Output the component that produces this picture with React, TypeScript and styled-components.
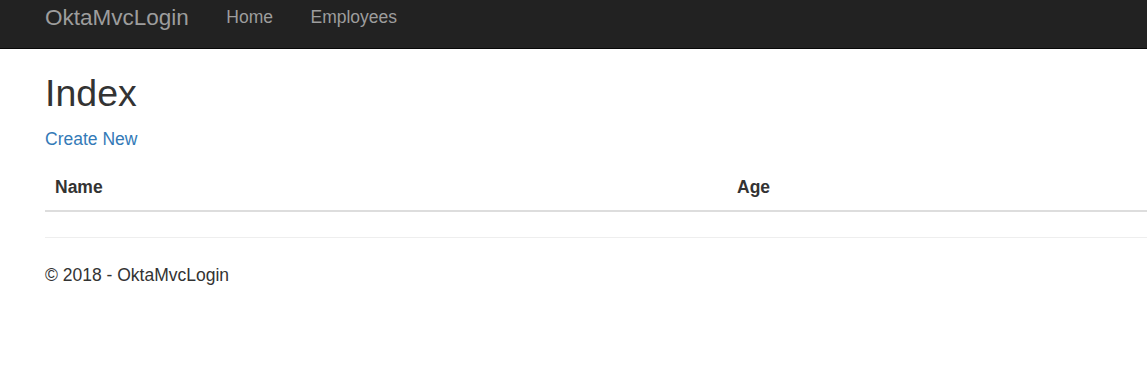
import React from 'react'
import styled, { createGlobalStyle } from 'styled-components'

const GlobalStyle = createGlobalStyle`
html, body {
margin: 0;
padding: 0;
background: #fff;
}
body {
font-family: "Liberation Sans", Arial, Helvetica, sans-serif;
font-size: 17.5px;
color: #333;
overflow: hidden;
}
* {
box-sizing: border-box;
}
`

const Navbar = styled.nav`
display: flex;
align-items: stretch;
height: 49px;
padding-left: 26.25px;
background-color: #222;
border-bottom: 1px solid #080808;
`

const Brand = styled.a`
display: block;
padding: 0 18.75px;
font-size: 22.5px;
line-height: 25px;
padding-top: 4.5px;
color: #9d9d9d;
text-decoration: none;
`

const NavList = styled.ul`
display: flex;
margin: 0;
padding: 0;
list-style: none;
`

const NavItem = styled.li`
a {
display: block;
padding: 4.5px 18.75px 0;
line-height: 25px;
color: #9d9d9d;
text-decoration: none;
}
`

const Body = styled.div`
padding-left: 45px;
`

const Title = styled.h2`
margin: 24px 0 13px;
font-size: 37.5px;
font-weight: 500;
line-height: 41px;
color: #333;
`

const Para = styled.p<{ $gap?: number }>`
margin: 0 0 ${(p) => p.$gap ?? 12.5}px;
line-height: 25px;
a {
color: #337ab7;
text-decoration: none;
}
`

const Table = styled.table`
width: 100%;
margin-bottom: 25px;
border-collapse: collapse;
border-spacing: 0;
th {
padding: 10px;
text-align: left;
font-weight: 700;
line-height: 25px;
vertical-align: bottom;
border-bottom: 2.5px solid #ddd;
}
th:first-child {
width: 682px;
}
`

const Rule = styled.hr`
margin: 0 0 25px;
border: 0;
border-top: 1px solid #eee;
`

const App = () => {
  return (
    <>
      <GlobalStyle />
      <Navbar>
        <Brand href="#">OktaMvcLogin</Brand>
        <NavList>
          <NavItem><a href="#">Home</a></NavItem>
          <NavItem><a href="#">Employees</a></NavItem>
        </NavList>
      </Navbar>
      <Body>
        <Title>Index</Title>
        <Para $gap={13}>
          <a href="#">Create New</a>
        </Para>
        <Table>
          <thead>
            <tr>
              <th>Name</th>
              <th>Age</th>
            </tr>
          </thead>
          <tbody></tbody>
        </Table>
        <Rule />
        <footer>
          <Para $gap={10}>&copy; 2018 - OktaMvcLogin</Para>
        </footer>
      </Body>
    </>
  )
}

export default App
